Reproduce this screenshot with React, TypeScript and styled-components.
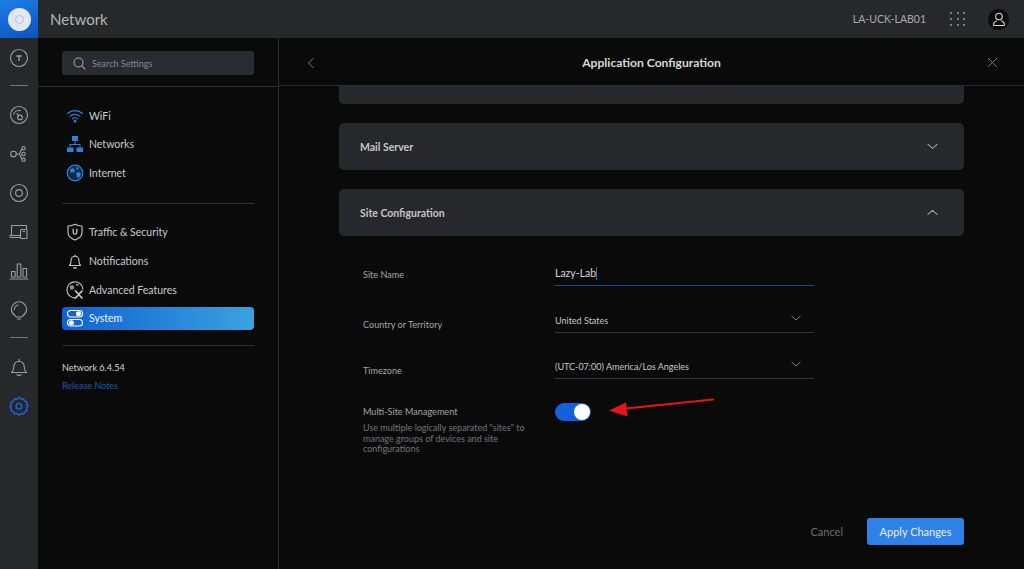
import React from "react";
import styled, { createGlobalStyle } from "styled-components";

const GlobalStyle = createGlobalStyle`
  html, body {
    margin: 0;
    padding: 0;
    background: #0a0a0b;
    font-family: Lato, "Open Sans", sans-serif;
    overflow: hidden;
  }
  * { box-sizing: border-box; }
`;

const line = { fill: "none", stroke: "currentColor", strokeWidth: 1.1, strokeLinecap: "round", strokeLinejoin: "round" } as const;

function Chevron({ up, size = 11 }: { up?: boolean; size?: number }) {
  return (
    <svg width={size} height={size * 0.6} viewBox="0 0 12 7.2" {...line}>
      <path d={up ? "M1 6 6 1.500l5 4.500" : "M1 1.500 6 6l5-4.500"} />
    </svg>
  );
}

const railIcons: Record<string, React.ReactNode> = {
  topology: (
    <>
      <circle cx="10" cy="10" r="8.500" />
      <path d="M7.800 8h4.400M10 8v4.400" strokeWidth="1.400" />
    </>
  ),
  dashboard: (
    <>
      <circle cx="10" cy="10" r="8.500" />
      <path d="M4.600 9.400C5.400 6.400 8.400 5 11.400 5.800" />
      <path d="M8.200 8.600 9.600 11" />
      <circle cx="11" cy="12.400" r="2.300" />
    </>
  ),
  clients: (
    <>
      <circle cx="4.500" cy="10" r="2.800" />
      <path d="M7.300 10h3.200M10.500 10l2-4.500M10.500 10l2 4.500" />
      <circle cx="14.500" cy="4.200" r="1.700" />
      <circle cx="14.500" cy="10" r="1.700" />
      <circle cx="14.500" cy="15.800" r="1.700" />
    </>
  ),
  target: (
    <>
      <circle cx="10" cy="10" r="8.500" />
      <circle cx="10" cy="10" r="3.400" />
    </>
  ),
  devices: (
    <>
      <path d="M2.500 13.500V3.500h15v3" />
      <path d="M1 13.500v1.200c0 .5.400.8.800.8H11M1 13.500h10" />
      <rect x="11.500" y="7.500" width="6.500" height="9" rx="1" />
      <path d="M14 9.500h1.500" />
    </>
  ),
  stats: (
    <>
      <rect x="2.500" y="10.500" width="3.600" height="5.500" />
      <rect x="8.200" y="3" width="3.600" height="13" />
      <rect x="14" y="7.500" width="3.600" height="8.500" />
      <path d="M1 18h18" />
    </>
  ),
  insights: (
    <>
      <path d="M7.400 17C6.600 15.400 2.400 14.200 2.400 9.400a7.600 7.600 0 0 1 15.200 0c0 4.800-4.200 6-5 7.600Z" />
      <path d="M5.400 9.400A4.800 4.800 0 0 1 9 5M8.600 19h2.800" />
    </>
  ),
  bell: (
    <>
      <path d="M2.500 15.500c1.800-1.500 2.300-3 2.300-6a5.200 5.200 0 0 1 10.400 0c0 3 .5 4.500 2.300 6Z" />
      <path d="M8 17.600c.8 1 3.200 1 4 0M10 2.400v1.800" />
    </>
  ),
  gear: (
    <>
      <path d="M10 1.300l2 1.900 2.600-.5 1 2.500 2.500 1-.5 2.600 1.600 1.200-1.600 2 .5 2.600-2.500 1-1 2.400-2.600-.5-2 1.700-2-1.700-2.600.5-1-2.400-2.500-1 .5-2.600-1.600-2 1.600-1.200-.5-2.600 2.500-1 1-2.500 2.600.5Z" strokeWidth="1.500" />
      <circle cx="10" cy="10.200" r="2.800" strokeWidth="1.500" />
    </>
  ),
};

function RailIcon({ name }: { name: string }) {
  return (
    <svg width="20" height="20" viewBox="0 0 20 20" {...line}>
      {railIcons[name]}
    </svg>
  );
}

const navIcons: Record<string, React.ReactNode> = {
  wifi: (
    <g fill="none" stroke="#2f7fd6" strokeWidth="1.100" strokeLinecap="round">
      <path d="M1.500 6.500c4.200-3.800 10.800-3.800 15 0" />
      <path d="M4 9.200c2.900-2.500 7.100-2.500 10 0" />
      <path d="M6.400 11.800c1.500-1.200 3.700-1.200 5.200 0" />
      <circle cx="9" cy="14.300" r=".9" fill="#2f7fd6" />
    </g>
  ),
  networks: (
    <g fill="#2f80dc">
      <rect x="6" y="1" width="6" height="5" />
      <rect x="1" y="12.500" width="6.500" height="4.500" />
      <rect x="10.500" y="12.500" width="6.500" height="4.500" />
      <path d="M8.500 6h1v3h5v3.500h-1V10h-9v2.500h-1V9h5Z" />
    </g>
  ),
  internet: (
    <g>
      <circle cx="9" cy="9" r="7.800" fill="#0f2b50" stroke="#2f7fd6" strokeWidth="1.200" />
      <path d="M4 5.500l3-1.500 2 2-1 2-3 1ZM10 9l3-1 2 2-2 4-2-1ZM10 3l3 1-1 1.500-2-.5Z" fill="#3a82d0" />
    </g>
  ),
  shield: (
    <g fill="none" stroke="#c9c9cc" strokeWidth="1.100" strokeLinejoin="round">
      <path d="M2 3c2.500 0 4.800-.5 7-1.700C11.200 2.500 13.500 3 16 3v6.500c0 3.500-3 6-7 7.500-4-1.500-7-4-7-7.500Z" />
      <path d="M7.200 5.800v3.600a1.800 1.800 0 0 0 3.600 0V5.800" strokeWidth="1.300" />
    </g>
  ),
  bell: (
    <g fill="none" stroke="#c9c9cc" strokeWidth="1.100" strokeLinejoin="round">
      <path d="M3.500 13.500c1.300-1.300 1.600-2.700 1.600-5.300a3.900 3.900 0 0 1 7.800 0c0 2.600.3 4 1.600 5.300Z" />
      <path d="M7.200 15.500c.8.800 2.800.8 3.600 0M9 2.800V4.200" />
    </g>
  ),
  advanced: (
    <g fill="none" stroke="#c9c9cc" strokeWidth="1.100">
      <path d="M9.500 16.800A8 8 0 1 1 16.900 8.500" />
      <path d="M3.500 5l3-1 2 2-1 2-3 1ZM10 2.500l3 1-1 1.500-2-.5Z" fill="#8f8f93" stroke="none" />
      <path d="M9.500 10l6.500 7M16 10l-6.500 7" strokeWidth="1.700" strokeLinecap="round" />
    </g>
  ),
  system: (
    <g fill="none" stroke="#fff" strokeWidth="1.200">
      <rect x="1.500" y="1.500" width="15" height="6.500" rx="3.200" />
      <circle cx="12.500" cy="4.800" r="1.900" fill="#fff" />
      <rect x="1.500" y="10.500" width="15" height="6.500" rx="3.200" />
      <circle cx="5.500" cy="13.800" r="1.900" fill="#fff" />
    </g>
  ),
};

function NavIcon({ name }: { name: string }) {
  return (
    <svg width="18" height="18" viewBox="0 0 18 18">
      {navIcons[name]}
    </svg>
  );
}

export default function App() {
  return (
    <Page>
      <GlobalStyle />
      <TopBar>
        <LogoTile>
          <LogoDisc>
            <LogoRing />
          </LogoDisc>
        </LogoTile>
        <AppName>Network</AppName>
        <DeviceName>LA-UCK-LAB01</DeviceName>
        <AppsGrid>
          {Array.from({ length: 9 }).map((_, i) => (
            <AppsDot key={i} />
          ))}
        </AppsGrid>
        <Avatar>
          <svg width="14" height="15" viewBox="0 0 14 15" fill="none" stroke="#d8d8da" strokeWidth="1.100">
            <circle cx="7" cy="4.500" r="3.300" />
            <path d="M1.500 13.500c0-3 1.500-4.300 3.500-4.800M12.500 13.500c0-3-1.500-4.300-3.500-4.800M1.500 13.500h11" />
          </svg>
        </Avatar>
      </TopBar>
      <Body>
        <Rail>
          <RailItem><RailIcon name="topology" /></RailItem>
          <RailRule />
          <RailItem><RailIcon name="dashboard" /></RailItem>
          <RailItem><RailIcon name="clients" /></RailItem>
          <RailItem><RailIcon name="target" /></RailItem>
          <RailItem><RailIcon name="devices" /></RailItem>
          <RailItem><RailIcon name="stats" /></RailItem>
          <RailItem><RailIcon name="insights" /></RailItem>
          <RailRule />
          <RailItem><RailIcon name="bell" /></RailItem>
          <RailItem $active><RailIcon name="gear" /></RailItem>
        </Rail>
        <Sidebar>
          <SearchArea>
            <SearchBox>
              <svg width="13" height="13" viewBox="0 0 13 13" fill="none" stroke="#a4a5a8" strokeWidth="1.100">
                <circle cx="5.500" cy="5.500" r="4.500" />
                <path d="M8.800 8.800 12.300 12.300" />
              </svg>
              Search Settings
            </SearchBox>
          </SearchArea>
          <NavArea>
            <NavGroup>
              <NavItem><NavIcon name="wifi" />WiFi</NavItem>
              <NavItem><NavIcon name="networks" />Networks</NavItem>
              <NavItem><NavIcon name="internet" />Internet</NavItem>
            </NavGroup>
            <FirstRule />
            <NavGroup>
              <NavItem><NavIcon name="shield" />Traffic &amp; Security</NavItem>
              <NavItem><NavIcon name="bell" />Notifications</NavItem>
              <NavItem><NavIcon name="advanced" />Advanced Features</NavItem>
              <NavItem $active><NavIcon name="system" />System</NavItem>
            </NavGroup>
            <SecondRule />
            <Version>Network 6.4.54</Version>
            <ReleaseNotes>Release Notes</ReleaseNotes>
          </NavArea>
        </Sidebar>
        <Main>
          <MainHeader>
            <HeaderButton>
              <svg width="8" height="12" viewBox="0 0 8 12" fill="none" stroke="currentColor" strokeWidth="1">
                <path d="M6.500 1 1.500 6l5 5" />
              </svg>
            </HeaderButton>
            <Title>Application Configuration</Title>
            <HeaderButton>
              <svg width="11" height="11" viewBox="0 0 11 11" fill="none" stroke="currentColor" strokeWidth="1">
                <path d="M1 1l9 9M10 1l-9 9" />
              </svg>
            </HeaderButton>
          </MainHeader>
          <Content>
            <ClippedCard />
            <Card>
              Mail Server
              <Chevron />
            </Card>
            <Card>
              Site Configuration
              <Chevron up />
            </Card>
            <Form>
              <FormRow $height={48}>
                <FieldLabel $top={14}>Site Name</FieldLabel>
                <NameField>Lazy-Lab<Caret /></NameField>
              </FormRow>
              <FormRow $height={46}>
                <FieldLabel>Country or Territory</FieldLabel>
                <SelectField>United States<Chevron size={10} /></SelectField>
              </FormRow>
              <FormRow $height={46}>
                <FieldLabel>Timezone</FieldLabel>
                <SelectField>(UTC-07:00) America/Los Angeles<Chevron size={10} /></SelectField>
              </FormRow>
              <SwitchRow>
                <div>
                  <FieldLabel $top={11}>Multi-Site Management</FieldLabel>
                  <Hint>Use multiple logically separated "sites" to manage groups of devices and site configurations</Hint>
                </div>
                <SwitchWrap>
                  <Switch>
                    <Knob />
                  </Switch>
                  <Arrow width="106" height="24" viewBox="0 0 106 24">
                    <path d="M105 2.500 18 11.500" stroke="#e8141c" strokeWidth="2.200" strokeLinecap="round" />
                    <path d="M1 13.500 18 5.500l1.500 14Z" fill="#e8141c" />
                  </Arrow>
                </SwitchWrap>
              </SwitchRow>
            </Form>
          </Content>
          <Footer>
            <CancelButton>Cancel</CancelButton>
            <ApplyButton>Apply Changes</ApplyButton>
          </Footer>
        </Main>
      </Body>
    </Page>
  );
}

const Page = styled.div`
  width: 1024px;
  height: 569px;
  display: flex;
  flex-direction: column;
  background: #0a0a0b;
  overflow: hidden;
`;

const TopBar = styled.header`
  height: 38px;
  flex: none;
  display: flex;
  align-items: center;
  background: #27282c;
  padding-right: 15px;
`;

const LogoTile = styled.div`
  width: 38px;
  height: 38px;
  display: flex;
  align-items: center;
  justify-content: center;
  background: linear-gradient(160deg, #1f7fe6, #0a52c2);
`;

const LogoDisc = styled.div`
  width: 23px;
  height: 23px;
  border-radius: 50%;
  background: #e4e8ee;
  display: flex;
  align-items: center;
  justify-content: center;
`;

const LogoRing = styled.div`
  width: 9px;
  height: 9px;
  border-radius: 50%;
  border: 1.500px solid #a9c7ea;
`;

const AppName = styled.div`
  margin-left: 12px;
  font-size: 15px;
  color: #b4b5b8;
  flex: 1;
`;

const DeviceName = styled.div`
  font-size: 10.500px;
  color: #a9aaad;
`;

const AppsGrid = styled.div`
  margin-left: 24px;
  width: 15px;
  display: grid;
  grid-template-columns: repeat(3, 2px);
  justify-content: space-between;
  row-gap: 4px;
`;

const AppsDot = styled.span`
  width: 2px;
  height: 2px;
  border-radius: 50%;
  background: #9a9b9f;
`;

const Avatar = styled.div`
  margin-left: 23px;
  width: 21px;
  height: 21px;
  border-radius: 50%;
  background: #0b0b0c;
  display: flex;
  align-items: center;
  justify-content: center;
`;

const Body = styled.div`
  flex: 1;
  min-height: 0;
  display: flex;
`;

const Rail = styled.nav`
  width: 38px;
  flex: none;
  background: #27282c;
  display: flex;
  flex-direction: column;
  align-items: center;
`;

const RailItem = styled.div<{ $active?: boolean }>`
  width: 38px;
  height: 39px;
  display: flex;
  align-items: center;
  justify-content: center;
  color: ${(p) => (p.$active ? "#1a63cf" : "#9c9da0")};
`;

const RailRule = styled.div`
  width: 18px;
  height: 1px;
  margin: 8px 0 9px;
  background: #76777a;
`;

const Sidebar = styled.aside`
  width: 241px;
  flex: none;
  border-right: 1px solid #2a2b2e;
  display: flex;
  flex-direction: column;
`;

const SearchArea = styled.div`
  height: 49px;
  flex: none;
  padding: 13px 24px 0;
  border-bottom: 1px solid #2f3033;
`;

const SearchBox = styled.div`
  height: 24px;
  border-radius: 3px;
  background: #2a2b2f;
  display: flex;
  align-items: center;
  gap: 6px;
  padding-left: 11px;
  font-size: 9px;
  color: #85868a;
`;

const NavArea = styled.div`
  padding: 17px 24px 0;
`;

const NavGroup = styled.div`
  display: flex;
  flex-direction: column;
  gap: 5.700px;
`;

const NavItem = styled.div<{ $active?: boolean }>`
  height: 23px;
  display: flex;
  align-items: center;
  gap: 5px;
  padding-left: 4px;
  border-radius: 4px;
  font-size: 10.500px;
  color: ${(p) => (p.$active ? "#f2f6fb" : "#c9c9cc")};
  background: ${(p) => (p.$active ? "linear-gradient(90deg, #0f61d2, #3ba2de)" : "transparent")};
`;

const FirstRule = styled.div`
  height: 1px;
  background: #2e2f32;
  margin: 18.500px 0 17px;
`;

const SecondRule = styled(FirstRule)`
  margin: 15px 0 16px;
`;

const Version = styled.div`
  font-size: 9.100px;
  line-height: 12px;
  color: #d2d2d5;
`;

const ReleaseNotes = styled.div`
  font-size: 9px;
  line-height: 12px;
  color: #1657b8;
  margin-top: 6px;
`;

const Main = styled.main`
  flex: 1;
  min-width: 0;
  display: flex;
  flex-direction: column;
`;

const MainHeader = styled.div`
  height: 48px;
  flex: none;
  display: flex;
  align-items: center;
  justify-content: space-between;
  padding: 2px 26px 0;
  border-bottom: 1px solid #2a2b2e;
`;

const HeaderButton = styled.div`
  width: 12px;
  display: flex;
  justify-content: center;
  color: #77787b;
`;

const Title = styled.div`
  font-size: 12.100px;
  font-weight: 700;
  color: #d8d8da;
`;

const Content = styled.div`
  padding: 0 60px;
  flex: 1;
  min-height: 0;
`;

const ClippedCard = styled.div`
  height: 18px;
  margin-bottom: 19px;
  background: #27282c;
  border-radius: 0 0 5px 5px;
`;

const Card = styled.div`
  height: 47px;
  margin-bottom: 19px;
  padding: 0 26px 0 21px;
  border-radius: 5px;
  background: #27282c;
  display: flex;
  align-items: center;
  justify-content: space-between;
  font-size: 10.500px;
  font-weight: 700;
  color: #c6c6c9;
  svg { color: #a5a6a9; }
`;

const Form = styled.div`
  padding-left: 24px;
  width: 475px;
`;

const FormRow = styled.div<{ $height: number }>`
  height: ${(p) => p.$height}px;
  display: grid;
  grid-template-columns: 192px 1fr;
  align-items: start;
`;

const FieldLabel = styled.div<{ $top?: number }>`
  font-size: 9.100px;
  line-height: 12px;
  color: #a3a4a7;
  padding-top: ${(p) => p.$top ?? 16}px;
`;

const NameField = styled.div`
  height: 31px;
  padding-top: 11px;
  border-bottom: 1px solid #17498f;
  font-size: 10.500px;
  line-height: 15px;
  color: #d6d6d8;
  display: flex;
  align-items: flex-start;
`;

const Caret = styled.span`
  width: 1px;
  height: 13px;
  margin-top: 1px;
  background: #2b6fd0;
`;

const SelectField = styled.div`
  height: 30px;
  padding-top: 11px;
  padding-right: 13px;
  border-bottom: 1px solid #333437;
  font-size: 9px;
  line-height: 13px;
  color: #c7c7ca;
  display: flex;
  justify-content: space-between;
  svg { color: #8b8c8f; margin-top: 1px; }
`;

const SwitchRow = styled.div`
  display: grid;
  grid-template-columns: 192px 1fr;
`;

const Hint = styled.div`
  width: 172px;
  margin-top: 5px;
  font-size: 9px;
  line-height: 10.500px;
  color: #737478;
`;

const SwitchWrap = styled.div`
  position: relative;
  padding-top: 8px;
`;

const Switch = styled.div`
  width: 36px;
  height: 18px;
  border-radius: 9px;
  background: #1261d8;
  display: flex;
  align-items: center;
  justify-content: flex-end;
  padding-right: 1px;
`;

const Knob = styled.div`
  width: 16px;
  height: 16px;
  border-radius: 50%;
  background: #fff;
`;

const Arrow = styled.svg`
  position: absolute;
  left: 53px;
  top: 2px;
`;

const Footer = styled.div`
  height: 51px;
  flex: none;
  margin-bottom: 24px;
  padding-right: 60px;
  display: flex;
  align-items: flex-end;
  justify-content: flex-end;
  gap: 24px;
`;

const CancelButton = styled.div`
  height: 27px;
  display: flex;
  align-items: center;
  font-size: 11px;
  color: #6d6e71;
`;

const ApplyButton = styled.div`
  width: 97px;
  height: 27px;
  border-radius: 3px;
  background: #2f80e7;
  display: flex;
  align-items: center;
  justify-content: center;
  font-size: 11px;
  color: #e8f1fc;
`;
